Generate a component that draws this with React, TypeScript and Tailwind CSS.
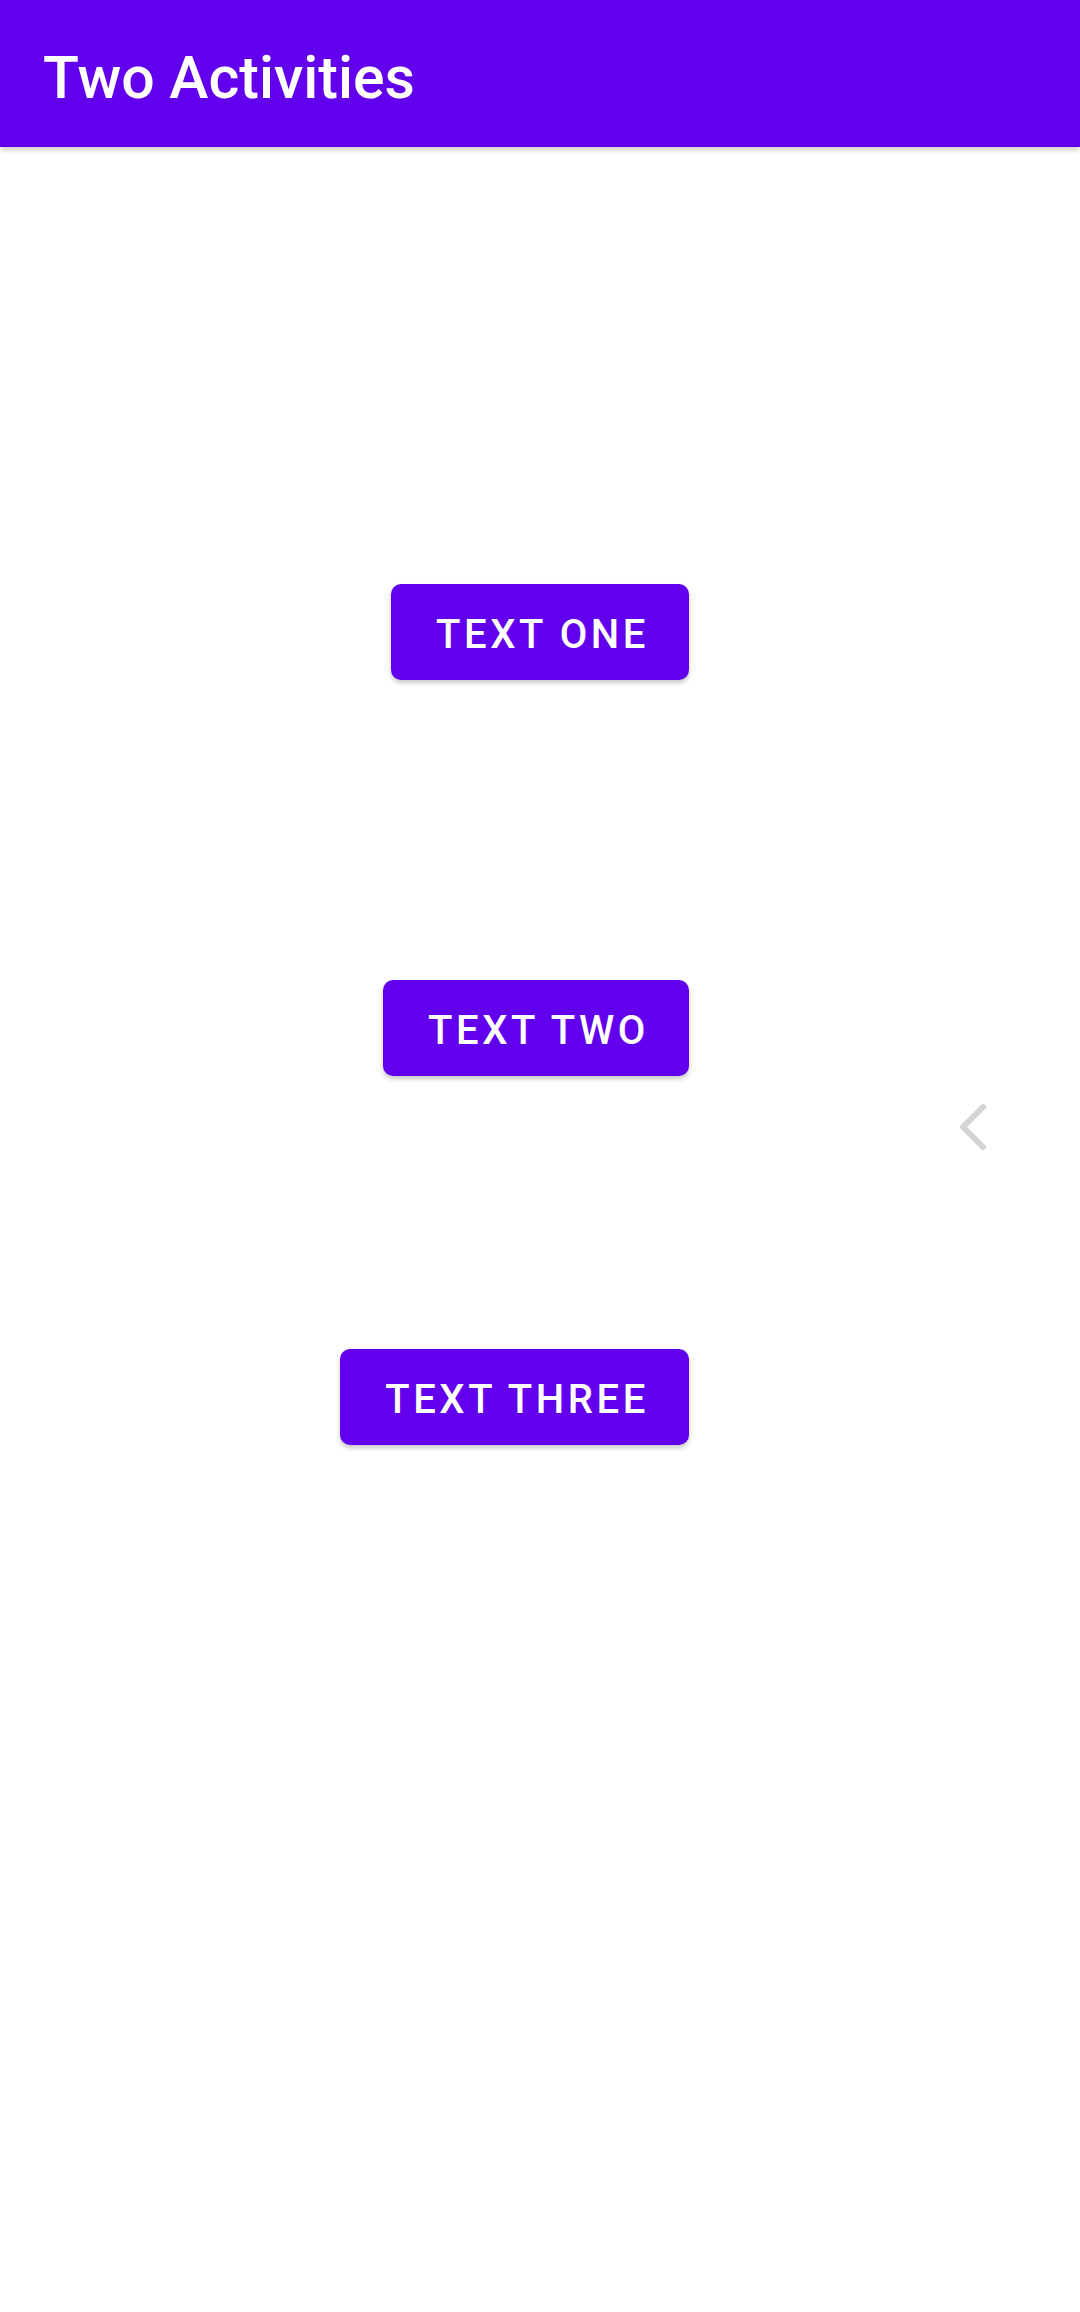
import React from 'react';

const buttons = ['Text One', 'Text Two', 'Text Three'];

const ActionButton: React.FC<{ label: string; className?: string }> = ({ label, className }) => (
  <button
    className={`h-[96px] rounded-[10px] bg-[#6200ee] pl-[45px] pr-[40px] pt-[6px] text-[40px] font-medium uppercase tracking-[0.09em] text-white shadow-[0_3px_5px_rgba(0,0,0,0.22)] ${className ?? ''}`}
  >
    {label}
  </button>
);

export default function App() {
  return (
    <div className="relative min-h-[2312px] w-[1080px] bg-white" style={{ fontFamily: 'Roboto, "Noto Sans", sans-serif' }}>
      <header className="flex h-[147px] items-center bg-[#6200ee] pl-[43px] pt-[8px] shadow-[0_3px_6px_rgba(0,0,0,0.2)]">
        <h1 className="text-[59px] font-medium leading-none text-white">Two Activities</h1>
      </header>

      <div className="flex flex-col items-end pr-[391px] pt-[437px]">
        <ActionButton label={buttons[0]} />
        <ActionButton label={buttons[1]} className="mt-[300px]" />
        <ActionButton label={buttons[2]} className="mt-[273px]" />
      </div>

      {/* back gesture hint */}
      <svg
        className="absolute left-[955px] top-[1100px]"
        width="40"
        height="54"
        viewBox="0 0 40 54"
        fill="none"
      >
        <path d="M28 7 L8 27 L28 47" stroke="#d4d4d4" strokeWidth="6" strokeLinecap="round" strokeLinejoin="round" />
      </svg>
    </div>
  );
}
